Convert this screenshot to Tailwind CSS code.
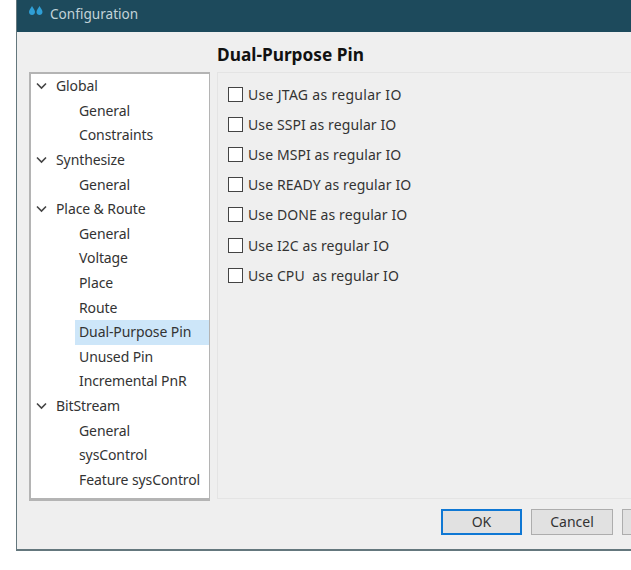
<!DOCTYPE html>
<html>
<head>
<meta charset="utf-8">
<script src="https://cdn.jsdelivr.net/npm/@tailwindcss/browser@4"></script>
</head>
<body class="bg-white overflow-hidden font-['Noto_Sans',sans-serif] text-[14px] text-[#333]">
<div class="w-[631px] h-[570px] bg-white pl-4 pb-5">
  <div class="w-[615px] h-[551px] flex flex-col bg-[#efefef] border-l border-b-2 border-[#64777d] overflow-hidden">
    <div class="h-[32px] shrink-0 bg-[#1d4a5c] flex items-center pl-[11px] pb-1 gap-[6px] text-[#c3d3d9] text-[13.6px]">
      <svg width="16" height="14" viewBox="0 0 16 14" class="-mt-[4px]"><path d="M4 1 C5 3 7 5 7 7 C7 9 5.5 10 4 10 C2.5 10 1 9 1 7 C1 5 3 3 4 1Z" fill="#2f9fd6"/><path d="M11.5 1 C12.5 3 14.5 5 14.5 7 C14.5 9 13 10 11.5 10 C10 10 8.5 9 8.5 7 C8.5 5 10.5 3 11.5 1Z" fill="#2f9fd6"/></svg>
      <span>Configuration</span>
    </div>
    <div class="flex-1 flex flex-col min-h-0">
      <div class="h-[40px] shrink-0 pl-[200px] flex items-end pb-[7px] font-bold text-[17.3px] leading-5 text-[#111]">Dual-Purpose Pin</div>
      <div class="flex pl-[12px] gap-[7px]">
        <div class="w-[181px] h-[429px] shrink-0 bg-white border-2 border-r border-[#b4b4b4] border-b-[3px] leading-none tracking-[-0.1px]">
          <div class="h-[24.6px] flex items-center pl-[5px] gap-[9px]"><svg width="11" height="8" viewBox="0 0 11 8"><path d="M1 1.5 L5.5 6 L10 1.5" fill="none" stroke="#444" stroke-width="1.6"/></svg><span>Global</span></div>
          <div class="h-[24.6px] flex items-center pl-[48px]">General</div>
          <div class="h-[24.6px] flex items-center pl-[48px]">Constraints</div>
          <div class="h-[24.6px] flex items-center pl-[5px] gap-[9px]"><svg width="11" height="8" viewBox="0 0 11 8"><path d="M1 1.5 L5.5 6 L10 1.5" fill="none" stroke="#444" stroke-width="1.6"/></svg><span>Synthesize</span></div>
          <div class="h-[24.6px] flex items-center pl-[48px]">General</div>
          <div class="h-[24.6px] flex items-center pl-[5px] gap-[9px]"><svg width="11" height="8" viewBox="0 0 11 8"><path d="M1 1.5 L5.5 6 L10 1.5" fill="none" stroke="#444" stroke-width="1.6"/></svg><span>Place &amp; Route</span></div>
          <div class="h-[24.6px] flex items-center pl-[48px]">General</div>
          <div class="h-[24.6px] flex items-center pl-[48px]">Voltage</div>
          <div class="h-[24.6px] flex items-center pl-[48px]">Place</div>
          <div class="h-[24.6px] flex items-center pl-[48px]">Route</div>
          <div class="h-[24.6px] flex items-center ml-[44px] pl-[4px] bg-[#cde6f9]">Dual-Purpose Pin</div>
          <div class="h-[24.6px] flex items-center pl-[48px]">Unused Pin</div>
          <div class="h-[24.6px] flex items-center pl-[48px]">Incremental PnR</div>
          <div class="h-[24.6px] flex items-center pl-[5px] gap-[9px]"><svg width="11" height="8" viewBox="0 0 11 8"><path d="M1 1.5 L5.5 6 L10 1.5" fill="none" stroke="#444" stroke-width="1.6"/></svg><span>BitStream</span></div>
          <div class="h-[24.6px] flex items-center pl-[48px]">General</div>
          <div class="h-[24.6px] flex items-center pl-[48px]">sysControl</div>
          <div class="h-[24.6px] flex items-center pl-[48px]">Feature sysControl</div>
        </div>
        <div class="flex-1 h-[427px] border-l border-t border-b border-[#e4e4e4] pt-[6px] pl-[10px] flex flex-col tracking-[0.1px]">
          <label class="h-[30.2px] flex items-center gap-[5px] shrink-0"><span class="w-[15px] h-[15px] bg-white border border-[#444]"></span><span class="tracking-[0.3px]">Use JTAG as regular IO</span></label>
          <label class="h-[30.2px] flex items-center gap-[5px] shrink-0"><span class="w-[15px] h-[15px] bg-white border border-[#444]"></span>Use SSPI as regular IO</label>
          <label class="h-[30.2px] flex items-center gap-[5px] shrink-0"><span class="w-[15px] h-[15px] bg-white border border-[#444]"></span>Use MSPI as regular IO</label>
          <label class="h-[30.2px] flex items-center gap-[5px] shrink-0"><span class="w-[15px] h-[15px] bg-white border border-[#444]"></span>Use READY as regular IO</label>
          <label class="h-[30.2px] flex items-center gap-[5px] shrink-0"><span class="w-[15px] h-[15px] bg-white border border-[#444]"></span>Use DONE as regular IO</label>
          <label class="h-[30.2px] flex items-center gap-[5px] shrink-0"><span class="w-[15px] h-[15px] bg-white border border-[#444]"></span>Use I2C as regular IO</label>
          <label class="h-[30.2px] flex items-center gap-[5px] shrink-0"><span class="w-[15px] h-[15px] bg-white border border-[#444]"></span><span class="whitespace-pre">Use CPU  as regular IO</span></label>
        </div>
      </div>
      <div class="flex pl-[424px] gap-[9px] mt-[8px]">
        <button class="w-[81px] h-[26px] shrink-0 bg-[#e1e1e1] border-2 border-[#0f78d4] pb-[2px]">OK</button>
        <button class="w-[82px] h-[26px] shrink-0 bg-[#e1e1e1] border border-[#adadad] pb-[2px]">Cancel</button>
        <button class="w-[82px] h-[26px] shrink-0 bg-[#e1e1e1] border border-[#adadad]"></button>
      </div>
    </div>
  </div>
</div>
</body>
</html>
